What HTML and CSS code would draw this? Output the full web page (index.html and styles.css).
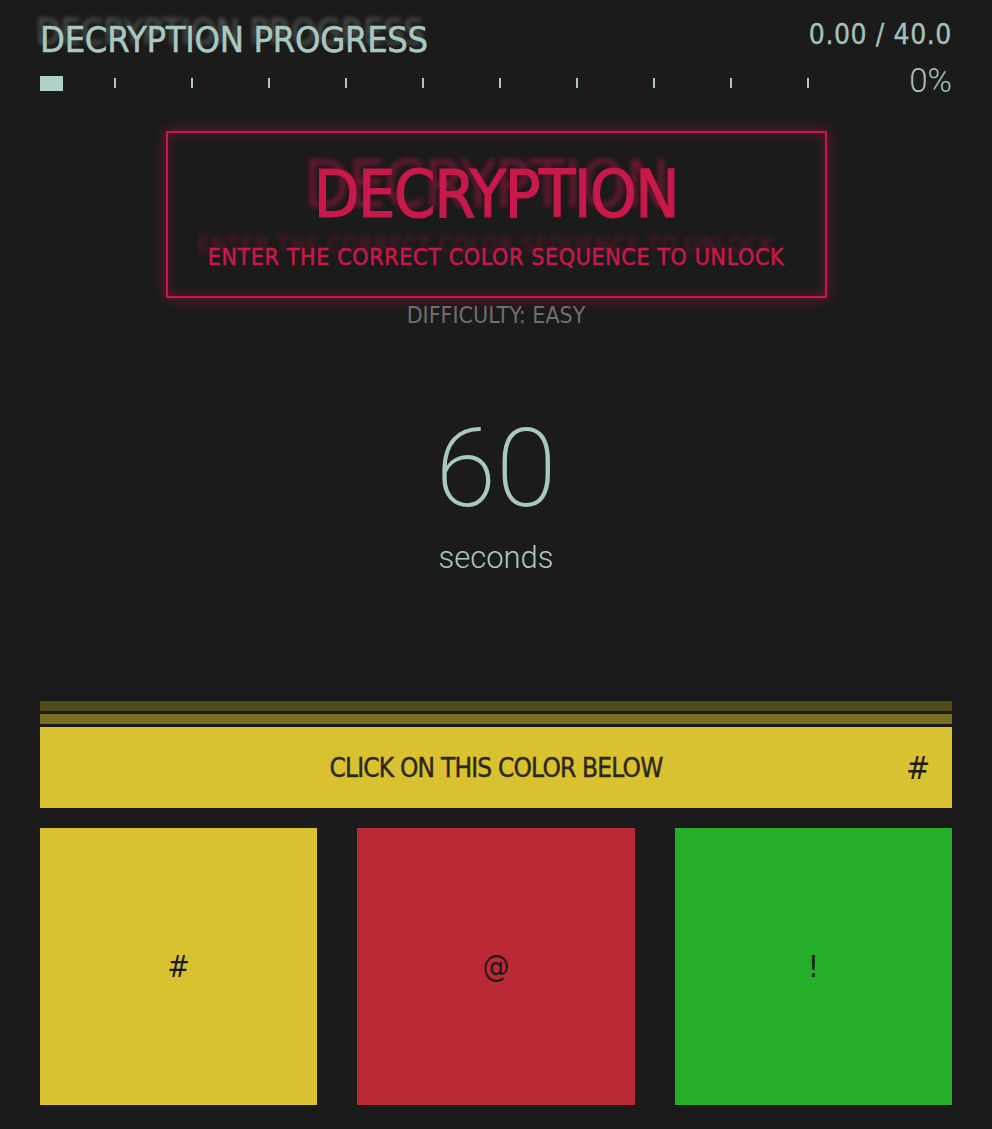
FILE: index.html
```html
<!DOCTYPE html>
<html lang="en">
<head>
<meta charset="utf-8">
<title>Decryption</title>
<link rel="stylesheet" href="styles.css">
</head>
<body>
<main class="page">
  <header class="progress">
    <div class="progress-head">
      <h1 class="progress-title">DECRYPTION PROGRESS</h1>
      <span class="progress-count">0.00 / 40.0</span>
    </div>
    <div class="progress-row">
      <div class="track">
        <span class="seg"></span><span class="seg"></span><span class="seg"></span><span class="seg"></span>
        <span class="seg"></span><span class="seg"></span><span class="seg"></span><span class="seg"></span>
        <span class="seg"></span><span class="seg"></span><span class="seg last"></span>
        <span class="fill"></span>
      </div>
      <span class="percent">0%</span>
    </div>
  </header>

  <section class="banner">
    <div class="banner-box">
      <h2 class="banner-title">DECRYPTION</h2>
      <p class="banner-sub">ENTER THE CORRECT COLOR SEQUENCE TO UNLOCK</p>
    </div>
    <p class="difficulty">DIFFICULTY: EASY</p>
  </section>

  <section class="timer">
    <div class="timer-num">60</div>
    <div class="timer-unit">seconds</div>
  </section>

  <section class="prompt">
    <div class="stripe stripe-dark"></div>
    <div class="stripe stripe-mid"></div>
    <div class="prompt-bar">
      <span class="prompt-text">CLICK ON THIS COLOR BELOW</span>
      <span class="prompt-sym">#</span>
    </div>
  </section>

  <section class="choices">
    <button class="choice yellow">#</button>
    <button class="choice red">@</button>
    <button class="choice green">!</button>
  </section>
</main>
</body>
</html>
```

FILE: styles.css
```css
* { box-sizing: border-box; }
html, body {
  margin: 0;
  padding: 0;
  background: #1b1b1b;
}
body {
  font-family: "DejaVu Sans Condensed", "DejaVu Sans", sans-serif;
  color: #a8c8c2;
}
.page {
  padding: 0 40px;
  display: flex;
  flex-direction: column;
}

/* progress header */
.progress { padding-top: 20px; }
.progress-head {
  display: flex;
  justify-content: space-between;
  align-items: flex-end;
  height: 40px;
}
.progress-title {
  margin: 0;
  font-size: 36px;
  font-weight: 400;
  line-height: 40px;
  letter-spacing: -0.3px;
  color: #a8c8c2;
  -webkit-text-stroke: 0.5px #a8c8c2;
  text-shadow: -4px -8px 4px rgba(150, 160, 158, 0.45);
}
.progress-count {
  font-size: 28px;
  line-height: 40px;
  letter-spacing: 0.6px;
  color: #a3c2bc;
  -webkit-text-stroke: 0.3px #a3c2bc;
  position: relative;
  top: -5px;
}
.progress-row {
  display: flex;
  align-items: center;
  justify-content: space-between;
  height: 34px;
  margin-top: 6px;
}
.track {
  position: relative;
  display: flex;
  width: 847px;
  height: 15px;
  align-items: center;
}
.seg {
  flex: 1;
  height: 10px;
  position: relative;
}
.seg::after {
  content: "";
  position: absolute;
  right: 1px;
  top: 0;
  width: 2px;
  height: 10px;
  background: #a8c8c2;
}
.seg.last::after { display: none; }
.fill {
  position: absolute;
  left: 0;
  top: 0;
  width: 23px;
  height: 15px;
  background: #b2d0ca;
}
.percent {
  font-family: "Roboto", "Liberation Sans", sans-serif;
  font-weight: 300;
  font-size: 33px;
  line-height: 34px;
  color: #a3c2bc;
  position: relative;
  top: -2px;
}

/* banner */
.banner {
  display: flex;
  flex-direction: column;
  align-items: center;
  margin-top: 31px;
}
.banner-box {
  width: 661px;
  height: 167px;
  border: 2px solid #c8184a;
  box-shadow: 0 0 12px rgba(200, 24, 74, 0.55), inset 0 0 14px rgba(200, 24, 74, 0.35);
  display: flex;
  flex-direction: column;
  align-items: center;
  padding-top: 27px;
}
.banner-title {
  margin: 0;
  font-size: 66px;
  font-weight: 400;
  line-height: 70px;
  letter-spacing: -1.4px;
  color: #c8194a;
  -webkit-text-stroke: 1.2px #c8194a;
  text-shadow: -10px -10px 5px rgba(200, 24, 74, 0.45);
}
.banner-sub {
  margin: 14px 0 0;
  font-size: 23px;
  line-height: 26px;
  color: #c8194a;
  letter-spacing: 0.65px;
  -webkit-text-stroke: 0.5px #c8194a;
  text-shadow: -10px -12px 5px rgba(200, 24, 74, 0.4);
}
.difficulty {
  margin: 4px 0 0;
  font-size: 23px;
  line-height: 26px;
  color: #6e6e6e;
}

/* timer */
.timer {
  display: flex;
  flex-direction: column;
  align-items: center;
  margin-top: 91px;
}
.timer-num {
  font-family: "Roboto", "Liberation Sans", sans-serif;
  font-weight: 200;
  font-size: 110px;
  line-height: 100px;
  color: #a8c8c2;
}
.timer-unit {
  font-family: "Roboto", "Liberation Sans", sans-serif;
  font-weight: 300;
  font-size: 31px;
  line-height: 36px;
  margin-top: 21px;
  color: #a8c8c2;
}

/* prompt */
.prompt {
  margin-top: 125px;
  display: flex;
  flex-direction: column;
  gap: 3px;
}
.stripe { height: 10px; }
.stripe-dark { background: #514a1e; }
.stripe-mid { background: #7a6d24; }
.prompt-bar {
  height: 81px;
  background: #dac130;
  display: flex;
  align-items: center;
  justify-content: center;
  position: relative;
}
.prompt-text {
  font-size: 26px;
  color: #2a2815;
  letter-spacing: -0.8px;
  -webkit-text-stroke: 0.4px #2a2815;
}
.prompt-sym {
  position: absolute;
  right: 22px;
  top: 50%;
  transform: translateY(-50%);
  font-size: 32px;
  color: #1e1d12;
}

/* choices */
.choices {
  margin-top: 20px;
  display: grid;
  grid-template-columns: repeat(3, 1fr);
  gap: 40px;
}
.choice {
  height: 277px;
  border: 0;
  padding: 0;
  font-family: inherit;
  font-size: 30px;
  color: #1b1b1b;
  display: flex;
  align-items: center;
  justify-content: center;
  cursor: pointer;
}
.yellow { background: #dac130; }
.red { background: #bb2836; }
.green { background: #24ae2a; }
```
